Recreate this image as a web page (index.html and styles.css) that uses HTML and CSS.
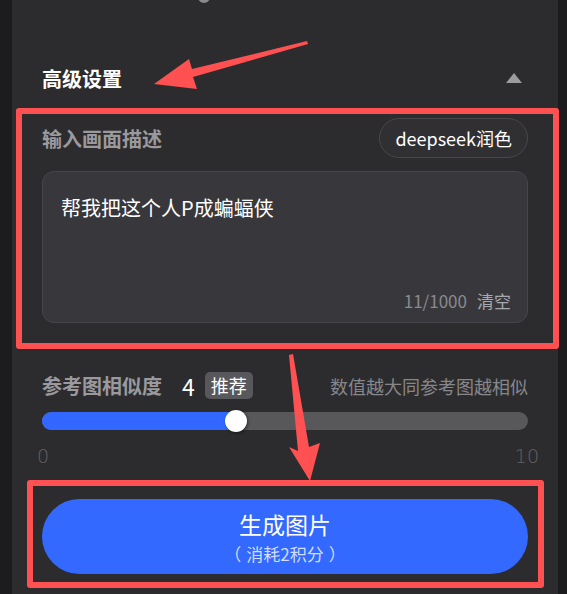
FILE: index.html
```html
<!DOCTYPE html>
<html lang="zh-CN">
<head>
  <meta charset="UTF-8">
  <meta name="viewport" content="width=device-width, initial-scale=1.0">
  <title>高级设置</title>
  <link rel="stylesheet" href="styles.css">
</head>
<body>
  <div class="panel">
    <div class="top-dot"></div>

    <div class="section-head">
      <span>高级设置</span>
      <span class="caret"></span>
    </div>

    <div class="label-row">
      <span class="label">输入画面描述</span>
      <button class="pill">deepseek润色</button>
    </div>

    <div class="prompt-box">
      <div class="prompt-text">帮我把这个人P成蝙蝠侠</div>
      <div class="prompt-foot">
        <span class="count">11/1000</span>
        <span class="clear">清空</span>
      </div>
    </div>

    <div class="sim-row">
      <span class="label">参考图相似度</span>
      <span class="sim-value">4</span>
      <span class="badge">推荐</span>
      <span class="hint">数值越大同参考图越相似</span>
    </div>

    <div class="slider">
      <div class="slider-fill" style="width: 40%"></div>
      <div class="slider-thumb" style="left: 40%"></div>
    </div>
    <div class="scale">
      <span>0</span>
      <span>10</span>
    </div>

    <button class="generate">
      <span class="gen-title">生成图片</span>
      <span class="gen-cost"><span class="paren">（</span>消耗2积分<span class="paren">）</span></span>
    </button>
  </div>

  <!-- annotations drawn over the screenshot -->
  <div class="mark mark-prompt"></div>
  <div class="mark mark-button"></div>
  <svg class="arrows" width="567" height="594" viewBox="0 0 567 594">
    <polygon points="307,41 192,69 189,59 154,84 197,89 193,77 308,44" fill="#ff5151"/>
    <polygon points="289,355 298,451 289,447 310,481 320,443 309,447 293,354" fill="#ff5151"/>
  </svg>
</body>
</html>
```

FILE: styles.css
```css
* {
  box-sizing: border-box;
}
body {
  margin: 0;
  width: 567px;
  height: 594px;
  overflow: hidden;
  background: #1c1c1e;
  font-family: "Noto Sans CJK SC", "Noto Sans", sans-serif;
  position: relative;
}
.panel {
  margin-left: 12px;
  width: 546px;
  height: 594px;
  padding: 0 30px;
  background: #2c2c2e;
  overflow: hidden;
}
.top-dot {
  width: 12px;
  height: 12px;
  margin: -9px 0 0 156px;
  border-radius: 50%;
  background: #8a8a8e;
}
.section-head {
  margin-top: 57px;
  height: 36px;
  display: flex;
  align-items: center;
  justify-content: space-between;
  color: #fff;
  font-size: 20px;
  font-weight: 700;
}
.caret {
  width: 0;
  height: 0;
  margin-right: 6px;
  border-left: 8px solid transparent;
  border-right: 8px solid transparent;
  border-bottom: 10px solid #9c9c9f;
}
.label-row {
  margin-top: 22px;
  height: 40px;
  display: flex;
  align-items: center;
  justify-content: space-between;
}
.label {
  color: #9a9a9e;
  font-size: 20px;
  font-weight: 700;
}
.pill {
  height: 40px;
  padding: 0 15px;
  border: 1px solid #48484c;
  border-radius: 20px;
  background: #303033;
  color: #fff;
  font-family: inherit;
  font-size: 18px;
}
.prompt-box {
  margin-top: 13px;
  height: 152px;
  padding: 22px 16px 10px 18px;
  display: flex;
  flex-direction: column;
  justify-content: space-between;
  background: #38383c;
  border: 1px solid #46464a;
  border-radius: 12px;
}
.prompt-text {
  color: #fff;
  font-size: 20px;
  line-height: 28px;
}
.prompt-foot {
  display: flex;
  justify-content: flex-end;
  gap: 10px;
  font-size: 17px;
  line-height: 22px;
}
.count {
  color: #8a8a8e;
}
.clear {
  color: #a8a8ac;
}
.sim-row {
  margin-top: 49px;
  height: 27px;
  display: flex;
  align-items: center;
}
.sim-value {
  margin-left: 20px;
  color: #fff;
  font-size: 23px;
}
.badge {
  margin-left: 10px;
  height: 27px;
  padding: 0 6px;
  line-height: 27px;
  border-radius: 5px;
  background: #58585c;
  color: #fff;
  font-size: 18px;
}
.hint {
  margin-left: auto;
  color: #87878b;
  font-size: 18px;
}
.slider {
  margin-top: 13px;
  height: 18px;
  position: relative;
  border-radius: 9px;
  background: #58585b;
}
.slider-fill {
  height: 100%;
  border-radius: 9px 0 0 9px;
  background: #3268ff;
}
.slider-thumb {
  position: absolute;
  top: -2px;
  width: 22px;
  height: 22px;
  margin-left: -11px;
  border-radius: 50%;
  background: #fff;
  box-shadow: 1px 1px 3px rgba(0, 0, 0, 0.5);
}
.scale {
  margin: 14px -11px 0 -5px;
  height: 24px;
  display: flex;
  justify-content: space-between;
  color: #626266;
  font-family: "DejaVu Sans", sans-serif;
  font-weight: 200;
  font-size: 19px;
  line-height: 24px;
}
.generate {
  margin-top: 31px;
  width: 100%;
  height: 75px;
  display: flex;
  flex-direction: column;
  align-items: center;
  justify-content: center;
  border: none;
  border-radius: 38px;
  background: #3369ff;
  color: #fff;
  font-family: "Noto Sans CJK SC", sans-serif;
}
.gen-title {
  font-size: 23px;
  line-height: 33px;
}
.gen-cost {
  font-size: 17px;
  line-height: 25px;
  color: rgba(255, 255, 255, 0.78);
}
.paren {
  margin: 0 5px;
}

/* annotation layer */
.mark {
  position: absolute;
  border: 6px solid #ff5151;
  border-radius: 3px;
}
.mark-prompt {
  left: 16px;
  top: 108px;
  width: 543px;
  height: 241px;
}
.mark-button {
  left: 27px;
  top: 480px;
  width: 517px;
  height: 108px;
}
.arrows {
  position: absolute;
  left: 0;
  top: 0;
}
```
